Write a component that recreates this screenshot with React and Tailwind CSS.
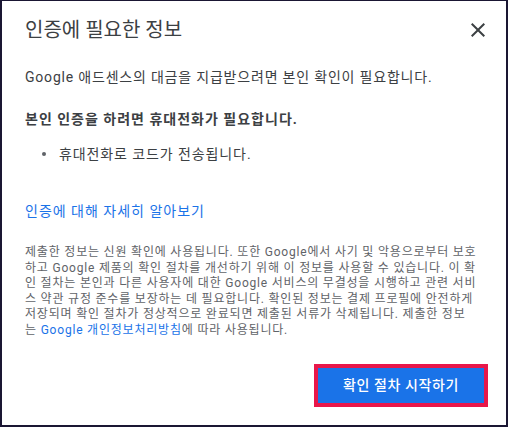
import React from 'react';

const fontStack = { fontFamily: 'Roboto, "Noto Sans CJK KR", sans-serif' };

const CloseIcon = () => (
    <svg width="24" height="24" viewBox="0 0 24 24" className="fill-[#3c4043]">
        <path d="M19 6.41L17.59 5 12 10.59 6.41 5 5 6.41 10.59 12 5 17.59 6.41 19 12 13.41 17.59 19 19 17.59 13.41 12z" />
    </svg>
);

const App = () => {
    return (
        <div
            style={fontStack}
            className="w-[508px] h-[427px] bg-white border-t border-l-2 border-r-2 border-b-2 border-[#1a1633] flex flex-col"
        >
            <div className="flex items-center justify-between mt-[15px] pl-[23px] pr-[16px]">
                <h1 className="text-[20px] leading-[28px] text-[#3c4043] font-normal">인증에 필요한 정보</h1>
                <button className="w-6 h-6 flex items-center justify-center">
                    <CloseIcon />
                </button>
            </div>

            <div className="pl-[23px] pr-[24px] flex flex-col">
                <p className="mt-[23px] text-[14px] leading-[20px] tracking-[0.8px] text-[#3c4043]">
                    Google 애드센스의 대금을 지급받으려면 본인 확인이 필요합니다.
                </p>
                <p className="mt-[22px] text-[14px] leading-[20px] tracking-[1px] font-bold text-[#3c4043]">
                    본인 인증을 하려면 휴대전화가 필요합니다.
                </p>
                <div className="mt-[15px] flex items-center text-[14px] leading-[20px] tracking-[0.9px] text-[#3c4043]">
                    <span className="w-[4px] h-[4px] rounded-full bg-[#5f6368] ml-[17px] mr-[13px]" />
                    <span>휴대전화로 코드가 전송됩니다.</span>
                </div>
                <a className="mt-[37px] text-[14px] leading-[20px] tracking-[1px] text-[#1a73e8] self-start cursor-pointer">
                    인증에 대해 자세히 알아보기
                </a>
                <p className="mt-[24px] w-[457px] text-[12px] leading-[15.6px] tracking-[0.8px] text-[#5f6368]">
                    제출한 정보는 신원 확인에 사용됩니다. 또한 Google에서 사기 및 악용으로부터 보호하고 Google 제품의 확인 절차를 개선하기 위해 이 정보를 사용할 수 있습니다. 이 확인 절차는 본인과 다른 사용자에 대한 Google 서비스의 무결성을 시행하고 관련 서비스 약관 규정 준수를 보장하는 데 필요합니다. 확인된 정보는 결제 프로필에 안전하게 저장되며 확인 절차가 정상적으로 완료되면 제출된 서류가 삭제됩니다. 제출한 정보<br />는 <a className="text-[#1a73e8] cursor-pointer">Google 개인정보처리방침</a>에 따라 사용됩니다.
                </p>
            </div>

            <div className="flex justify-end mt-[25px] pr-[18px]">
                <div className="border-[4px] border-[#e8174a]">
                    <button className="w-[166px] h-[35px] bg-[#1a73e8] text-white text-[14px] tracking-[0.6px] font-medium">
                        확인 절차 시작하기
                    </button>
                </div>
            </div>
        </div>
    );
};

export default App;
